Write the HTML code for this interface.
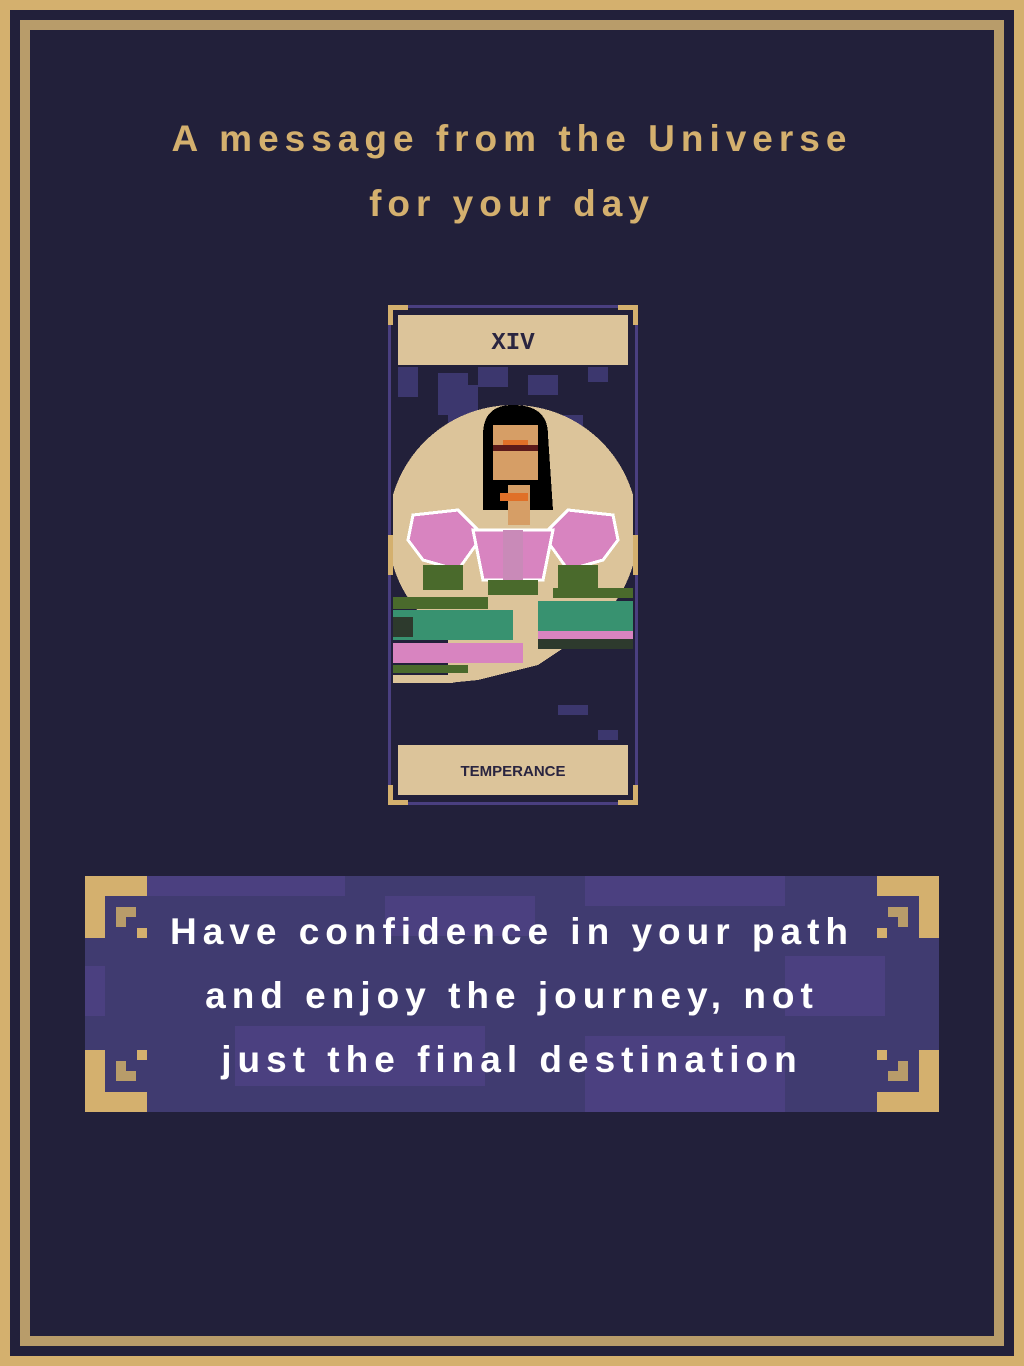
<!DOCTYPE html>
<html><head><meta charset="utf-8"><style>
html,body{margin:0;padding:0;}
body{width:1024px;height:1366px;background:#d4b06e;position:relative;overflow:hidden;font-family:"Liberation Sans",sans-serif;}
.b1{position:absolute;left:10px;top:10px;right:10px;bottom:10px;background:#22203a;}
.b2{position:absolute;left:20px;top:20px;right:20px;bottom:20px;background:#b89c6a;}
.b3{position:absolute;left:30px;top:30px;right:30px;bottom:30px;background:#22203a;}
.title{position:absolute;left:0;width:1024px;text-align:center;color:#d4b06e;font-weight:bold;font-size:37px;letter-spacing:6px;}
.q{position:absolute;left:0;width:1024px;text-align:center;color:#fff;font-weight:bold;font-size:37px;letter-spacing:6px;}
</style></head><body>
<div class="b1"></div><div class="b2"></div><div class="b3"></div>
<div class="title" style="top:118px">A message from the Universe</div>
<div class="title" style="top:183px">for your day</div>

<svg style="position:absolute;left:388px;top:305px" width="250" height="500" viewBox="0 0 250 500" shape-rendering="crispEdges">
<defs><clipPath id="c"><rect x="5" y="5" width="240" height="490"/></clipPath></defs>
<rect x="0" y="0" width="250" height="500" fill="#22203a"/>
<rect x="0" y="0" width="250" height="500" fill="none" stroke="#4a3f80" stroke-width="6"/>
<g fill="#3c376e">
<rect x="10" y="62" width="20" height="30"/><rect x="50" y="68" width="30" height="40"/><rect x="90" y="62" width="30" height="20"/><rect x="140" y="70" width="30" height="20"/><rect x="60" y="100" width="20" height="30"/><rect x="175" y="110" width="20" height="30"/><rect x="10" y="180" width="10" height="30"/><rect x="200" y="62" width="20" height="15"/><rect x="170" y="400" width="30" height="10"/><rect x="210" y="425" width="20" height="10"/><rect x="50" y="80" width="40" height="30"/>
</g>
<g clip-path="url(#c)">
<circle cx="125" cy="225" r="125" fill="#dcc49a"/>
<rect x="0" y="320" width="250" height="60" fill="#22203a"/>
<polygon points="60,320 210,320 150,360 90,375 60,378" fill="#dcc49a"/>
</g>
<path d="M95,205 L95,130 Q95,100 125,100 Q160,100 160,130 L165,205 Z" fill="#000"/>
<rect x="105" y="120" width="45" height="55" fill="#d69e66"/>
<rect x="105" y="140" width="45" height="6" fill="#5c1a1a"/>
<rect x="115" y="135" width="25" height="5" fill="#e07028"/>
<rect x="120" y="180" width="22" height="40" fill="#d69e66"/>
<rect x="112" y="188" width="28" height="8" fill="#e07028"/>
<g fill="#d884c0" stroke="#fff" stroke-width="3">
<polygon points="25,210 70,205 95,230 70,265 35,255 20,235"/>
<polygon points="225,210 180,205 155,230 180,265 215,255 230,235"/>
<polygon points="85,225 165,225 155,275 95,275"/>
</g>
<rect x="115" y="225" width="20" height="50" fill="#c98ab8"/>
<g fill="#4a6a2c"><rect x="35" y="260" width="40" height="25"/><rect x="170" y="260" width="40" height="25"/><rect x="100" y="275" width="50" height="15"/></g>
<g>
<rect x="5" y="292" width="95" height="12" fill="#4a6a2c"/>
<rect x="5" y="305" width="120" height="30" fill="#389270"/>
<rect x="5" y="312" width="20" height="20" fill="#2d3a2d"/>
<rect x="5" y="338" width="130" height="20" fill="#d884c0"/>
<rect x="5" y="360" width="75" height="8" fill="#4a6a2c"/>
<rect x="5" y="370" width="60" height="8" fill="#dcc49a"/>
<rect x="165" y="283" width="80" height="10" fill="#4a6a2c"/>
<rect x="150" y="296" width="95" height="30" fill="#389270"/>
<rect x="150" y="326" width="95" height="8" fill="#d884c0"/>
<rect x="150" y="334" width="95" height="10" fill="#2d3a2d"/>
</g>
<rect x="10" y="10" width="230" height="50" fill="#dcc49a"/>
<rect x="10" y="440" width="230" height="50" fill="#dcc49a"/>
<text x="125" y="44" text-anchor="middle" font-family="Liberation Mono,monospace" font-weight="bold" font-size="24" fill="#2a2540">XIV</text>
<text x="125" y="471" text-anchor="middle" font-family="Liberation Sans,sans-serif" font-weight="bold" font-size="15" fill="#2a2540">TEMPERANCE</text>
<g fill="#d4b06e"><rect x="0" y="0" width="20" height="5"/><rect x="0" y="0" width="5" height="20"/><rect x="230" y="0" width="20" height="5"/><rect x="245" y="0" width="5" height="20"/><rect x="0" y="495" width="20" height="5"/><rect x="0" y="480" width="5" height="20"/><rect x="230" y="495" width="20" height="5"/><rect x="245" y="480" width="5" height="20"/><rect x="0" y="230" width="5" height="40"/><rect x="245" y="230" width="5" height="40"/></g>
</svg>

<svg style="position:absolute;left:85px;top:876px" width="854" height="236" shape-rendering="crispEdges">
<rect width="854" height="236" fill="#403b70"/>
<g fill="#4b4080">
<rect x="60" y="0" width="200" height="20"/><rect x="300" y="20" width="150" height="40"/><rect x="500" y="0" width="200" height="30"/><rect x="150" y="150" width="250" height="60"/><rect x="500" y="160" width="200" height="76"/><rect x="700" y="80" width="100" height="60"/><rect x="0" y="90" width="20" height="50"/>
</g>
<g fill="#d4b06e">
<rect x="0" y="0" width="62" height="20"/><rect x="0" y="0" width="20" height="62"/>
<rect x="792" y="0" width="62" height="20"/><rect x="834" y="0" width="20" height="62"/>
<rect x="0" y="216" width="62" height="20"/><rect x="0" y="174" width="20" height="62"/>
<rect x="792" y="216" width="62" height="20"/><rect x="834" y="174" width="20" height="62"/>
<rect x="52" y="52" width="10" height="10"/><rect x="792" y="52" width="10" height="10"/><rect x="52" y="174" width="10" height="10"/><rect x="792" y="174" width="10" height="10"/>
</g>
<g fill="#b89c6a">
<rect x="31" y="31" width="20" height="10"/><rect x="31" y="31" width="10" height="20"/>
<rect x="803" y="31" width="20" height="10"/><rect x="813" y="31" width="10" height="20"/>
<rect x="31" y="195" width="20" height="10"/><rect x="31" y="185" width="10" height="20"/>
<rect x="803" y="195" width="20" height="10"/><rect x="813" y="185" width="10" height="20"/>
</g>
</svg>
<div class="q" style="top:911px">Have confidence in your path</div>
<div class="q" style="top:975px">and enjoy the journey, not</div>
<div class="q" style="top:1039px">just the final destination</div>
</body></html>
